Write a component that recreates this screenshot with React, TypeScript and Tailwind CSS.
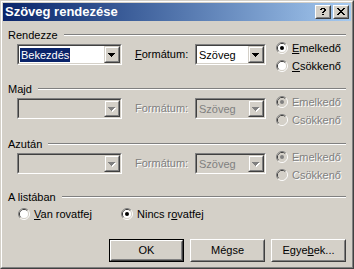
import React from "react";

const Px = ({ rows, color, x, y }: { rows: string[]; color: string; x: number; y: number }) => (
  <>
    {rows.flatMap((r, j) =>
      r.split("").map((c, i) =>
        c === "X" ? <rect key={`${i}-${j}`} x={x + i} y={y + j} width={1} height={1} fill={color} /> : null
      )
    )}
  </>
);

function TitleBtn({ kind }: { kind: "help" | "close" }) {
  const help = [".XXXX.", "XX..XX", "....XX", "...XX.", "..XX..", "......", "..XX.."];
  const close = ["XX....XX", ".XX..XX.", "..XXXX..", "...XX...", "..XXXX..", ".XX..XX.", "XX....XX"];
  return (
    <div className="w-[16px] h-[14px] border border-t-white border-l-white border-b-[#404040] border-r-[#404040]">
      <div className="w-full h-full bg-[#d4d0c8] border border-t-[#d4d0c8] border-l-[#d4d0c8] border-b-[#808080] border-r-[#808080] relative">
        <svg width="12" height="10" className="absolute left-0 top-0" shapeRendering="crispEdges">
          {kind === "help" ? <Px rows={help} color="#000" x={3} y={1} /> : <Px rows={close} color="#000" x={2} y={1} />}
        </svg>
      </div>
    </div>
  );
}

function Arrow({ disabled }: { disabled?: boolean }) {
  const rows = ["XXXXXXX", ".XXXXX.", "..XXX..", "...X..."];
  return (
    <svg width="12" height="13" shapeRendering="crispEdges">
      {disabled && <Px rows={rows} color="#fff" x={3} y={6} />}
      <Px rows={rows} color={disabled ? "#808080" : "#000"} x={2} y={5} />
    </svg>
  );
}

function Combo({
  w,
  disabled,
  children,
}: {
  w: string;
  disabled?: boolean;
  children?: React.ReactNode;
}) {
  return (
    <div className={`${w} h-[21px] border border-t-[#808080] border-l-[#808080] border-b-white border-r-white`}>
      <div
        className={`h-full flex border border-t-[#404040] border-l-[#404040] border-b-[#d4d0c8] border-r-[#d4d0c8] ${
          disabled ? "bg-[#d4d0c8]" : "bg-white"
        }`}
      >
        <div className="flex-1 flex items-center overflow-hidden">{children}</div>
        <div className="w-[16px] h-full border border-t-[#d4d0c8] border-l-[#d4d0c8] border-b-[#404040] border-r-[#404040]">
          <div className="w-full h-full bg-[#d4d0c8] border border-t-white border-l-white border-b-[#808080] border-r-[#808080] flex items-start justify-start">
            <Arrow disabled={disabled} />
          </div>
        </div>
      </div>
    </div>
  );
}

function Radio({ checked, disabled }: { checked?: boolean; disabled?: boolean }) {
  return (
    <svg width="12" height="12" className="shrink-0">
      <path d="M2.11 9.89 A5.5 5.5 0 0 1 9.89 2.11" fill="none" stroke="#808080" strokeWidth="1" />
      <path d="M9.89 2.11 A5.5 5.5 0 0 1 2.11 9.89" fill="none" stroke="#ffffff" strokeWidth="1" />
      <path d="M2.82 9.18 A4.5 4.5 0 0 1 9.18 2.82" fill="none" stroke="#404040" strokeWidth="1" />
      <path d="M9.18 2.82 A4.5 4.5 0 0 1 2.82 9.18" fill="none" stroke="#d4d0c8" strokeWidth="1" />
      <circle cx="6" cy="6" r="4" fill={disabled ? "#d4d0c8" : "#ffffff"} />
      {checked && <circle cx="6" cy="6" r="2" fill={disabled ? "#808080" : "#000000"} />}
    </svg>
  );
}

const etched = "text-[#808080] [text-shadow:1px_1px_0_#ffffff]";

function RadioLabel({
  checked,
  disabled,
  children,
}: {
  checked?: boolean;
  disabled?: boolean;
  children: React.ReactNode;
}) {
  return (
    <div className="flex items-center h-[12px]">
      <Radio checked={checked} disabled={disabled} />
      <span className={`ml-[4px] leading-[12px] whitespace-nowrap ${disabled ? etched : ""}`}>{children}</span>
    </div>
  );
}

function Header({ label, className }: { label: string; className?: string }) {
  return (
    <div className={`flex items-center h-[14px] ${className ?? ""}`}>
      <span className="leading-[14px] whitespace-nowrap">{label}</span>
      <div className="flex-1 ml-[6px] h-[2px] border-t border-t-[#808080] border-b border-b-white" />
    </div>
  );
}

function SortRow({ first, disabled }: { first?: React.ReactNode; disabled?: boolean }) {
  return (
    <div className="flex h-[32px]">
      <div className="ml-[9px] mt-[2px]">
        <Combo w="w-[105px]" disabled={disabled}>
          {first}
        </Combo>
      </div>
      <div className={`ml-[13px] w-[60px] mt-[2px] h-[21px] flex items-center ${disabled ? etched : ""}`}>
        {disabled ? (
          "Formátum:"
        ) : (
          <span>
            <u>F</u>ormátum:
          </span>
        )}
      </div>
      <div className="mt-[2px]">
        <Combo w="w-[71px]" disabled={disabled}>
          <span className={`pl-[2px] leading-[14px] ${disabled ? "text-[#808080]" : ""}`}>Szöveg</span>
        </Combo>
      </div>
      <div className="ml-[10px] flex flex-col gap-[6px]">
        <RadioLabel checked disabled={disabled}>
          {disabled ? "Emelkedő" : <><u>E</u>melkedő</>}
        </RadioLabel>
        <RadioLabel disabled={disabled}>{disabled ? "Csökkenő" : <><u>C</u>sökkenő</>}</RadioLabel>
      </div>
    </div>
  );
}

function Button({ children, def }: { children: React.ReactNode; def?: boolean }) {
  if (def) {
    return (
      <div className="w-[75px] h-[23px] border border-black">
        <div className="w-full h-full border border-t-white border-l-white border-b-[#404040] border-r-[#404040]">
          <div className="w-full h-full border border-t-[#d4d0c8] border-l-[#d4d0c8] border-b-[#808080] border-r-[#808080] flex items-center justify-center">
            {children}
          </div>
        </div>
      </div>
    );
  }
  return (
    <div className="w-[75px] h-[23px] border border-t-white border-l-white border-b-[#404040] border-r-[#404040]">
      <div className="w-full h-full border border-t-[#d4d0c8] border-l-[#d4d0c8] border-b-[#808080] border-r-[#808080] flex items-center justify-center">
        {children}
      </div>
    </div>
  );
}

export default function App() {
  return (
    <div className="w-[354px] h-[269px] font-['Liberation_Sans',Arial,sans-serif] text-[11px] text-black border border-t-[#d4d0c8] border-l-[#d4d0c8] border-b-[#404040] border-r-[#404040] bg-[#d4d0c8]">
      <div className="w-full h-full border border-t-white border-l-white border-b-[#808080] border-r-[#808080] p-px flex flex-col">
        <div className="h-[18px] bg-gradient-to-r from-[#0a246a] to-[#a6caf0] flex items-center pl-[2px] pr-[2px]">
          <span className="text-white font-bold text-[13px] leading-[18px] flex-1">Szöveg rendezése</span>
          <TitleBtn kind="help" />
          <div className="w-[2px]" />
          <TitleBtn kind="close" />
        </div>
        <div className="flex-1 flex flex-col pl-[5px] pr-[5px] pt-[7px]">
          <Header label="Rendezze" />
          <SortRow
            first={
              <span className="ml-[1px] pl-[1px] pr-[1px] leading-[14px] bg-[#0a246a] text-white">
                Bekezdés
              </span>
            }
          />
          <Header label="Majd" className="mt-[8px]" />
          <SortRow disabled />
          <Header label="Azután" className="mt-[9px]" />
          <SortRow disabled />
          <Header label="A listában" className="mt-[7px]" />
          <div className="flex mt-[4px] h-[12px]">
            <div className="ml-[10px] w-[103px]">
              <RadioLabel>
                <u>V</u>an rovatfej
              </RadioLabel>
            </div>
            <RadioLabel checked>
              Nincs r<u>o</u>vatfej
            </RadioLabel>
          </div>
          <div className="flex justify-end gap-[6px] mt-[19px]">
            <Button def>OK</Button>
            <Button>Mégse</Button>
            <Button>
              <span>
                Egye<u>b</u>ek...
              </span>
            </Button>
          </div>
        </div>
      </div>
    </div>
  );
}
